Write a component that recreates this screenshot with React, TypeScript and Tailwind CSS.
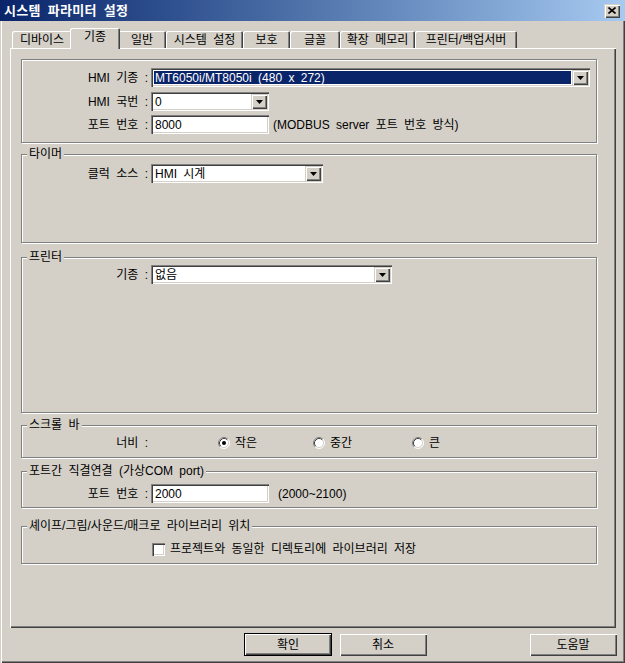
import React from "react";

const raised =
  "shadow-[inset_1px_1px_#d4d0c8,inset_2px_2px_#ffffff,inset_-1px_-1px_#404040,inset_-2px_-2px_#808080]";
const sunken =
  "shadow-[inset_1px_1px_#808080,inset_2px_2px_#404040,inset_-1px_-1px_#ffffff,inset_-2px_-2px_#d4d0c8]";
const etched = "border border-[#808080] shadow-[inset_1px_1px_#ffffff,1px_1px_#ffffff]";

function Arrow() {
  return (
    <div className={`w-[16px] h-full bg-[#d4d0c8] flex items-center justify-center ${raised}`}>
      <svg width="7" height="4" viewBox="0 0 7 4">
        <path d="M0 0H7L3.5 4Z" fill="#000" />
      </svg>
    </div>
  );
}

function Combo({ width, value, selected }: { width: string; value: string; selected?: boolean }) {
  return (
    <div className={`${width} h-[19px] p-[2px] bg-white flex ${sunken}`}>
      <div className="flex-1 min-w-0 p-[1px] flex">
        <span
          className={`flex-1 flex items-center pl-[1px] leading-none ${
            selected ? "bg-[#0a246a] text-white" : "text-black"
          }`}
        >
          {value}
        </span>
      </div>
      <Arrow />
    </div>
  );
}

function Input({ width, value }: { width: string; value: string }) {
  return (
    <div className={`${width} h-[19px] p-[2px] bg-white flex items-center ${sunken}`}>
      <span className="pl-[2px] leading-none">{value}</span>
    </div>
  );
}

function Label({ text }: { text: string }) {
  return <div className="w-[129px] shrink-0 text-right pr-[3px] leading-none">{text}</div>;
}

function Group({
  title,
  className,
  children,
}: {
  title?: string;
  className: string;
  children?: React.ReactNode;
}) {
  return (
    <div className={`relative w-[576px] ${etched} ${className}`}>
      {title && (
        <span className="absolute left-[5px] -top-[7px] px-[2px] bg-[#d4d0c8] leading-[13px]">{title}</span>
      )}
      {children}
    </div>
  );
}

function Radio({ checked }: { checked?: boolean }) {
  return (
    <svg width="12" height="12" viewBox="0 0 12 12" className="shrink-0">
      <circle cx="6" cy="6" r="5" fill="#fff" />
      <path d="M2.11 9.89A5.5 5.5 0 0 1 9.89 2.11" stroke="#808080" fill="none" />
      <path d="M9.89 2.11A5.5 5.5 0 0 1 2.11 9.89" stroke="#ffffff" fill="none" />
      <path d="M2.82 9.18A4.5 4.5 0 0 1 9.18 2.82" stroke="#404040" fill="none" />
      <path d="M9.18 2.82A4.5 4.5 0 0 1 2.82 9.18" stroke="#d4d0c8" fill="none" />
      {checked && <circle cx="6" cy="6" r="2" fill="#000" />}
    </svg>
  );
}

const tabs = [
  { label: "디바이스", w: "w-[60px]" },
  { label: "기종", w: "w-[50px]", active: true },
  { label: "일반", w: "w-[48px]" },
  { label: "시스템 설정", w: "w-[77px]" },
  { label: "보호", w: "w-[47px]" },
  { label: "글꼴", w: "w-[50px]" },
  { label: "확장 메모리", w: "w-[75px]" },
  { label: "프린터/백업서버", w: "w-[102px]" },
];

function Button({ text, primary, className }: { text: string; primary?: boolean; className: string }) {
  return (
    <div
      className={`w-[88px] h-[23px] flex items-center justify-center bg-[#d4d0c8] leading-none ${className} ${
        primary
          ? "shadow-[inset_0_0_0_1px_#000,inset_2px_2px_#ffffff,inset_-2px_-2px_#404040,inset_-3px_-3px_#808080]"
          : raised
      }`}
    >
      {text}
    </div>
  );
}

export default function App() {
  return (
    <div className="w-[625px] h-[663px] bg-[#d4d0c8] flex flex-col text-[12px] text-black [word-spacing:3px] font-['Liberation_Sans','Noto_Sans_CJK_KR',sans-serif] shadow-[inset_1px_1px_#d4d0c8,inset_2px_2px_#ffffff,inset_-1px_-1px_#404040,inset_-2px_-2px_#808080] select-none">
      {/* title bar */}
      <div className="h-[21px] shrink-0 bg-gradient-to-r from-[#0a246a] to-[#a6caf0] flex items-center justify-between pl-[4px] pr-[5px]">
        <span className="text-white font-bold text-[13px] leading-none tracking-[0.3px]">시스템 파라미터 설정</span>
        <div className={`w-[16px] h-[14px] bg-[#d4d0c8] flex items-center justify-center ${raised}`}>
          <svg width="8" height="7" viewBox="0 0 8 7">
            <path d="M0.5 0.5L7.5 6.5M7.5 0.5L0.5 6.5" stroke="#000" strokeWidth="1.6" />
          </svg>
        </div>
      </div>

      {/* tabs */}
      <div className="mt-[7px] h-[20px] flex items-end pl-[12px]">
        {tabs.map((t) =>
          t.active ? (
            <div
              key={t.label}
              className={`${t.w} -mx-[2px] h-[21px] -mb-[1px] relative z-10 bg-[#d4d0c8] rounded-t-[2px] flex justify-center pt-[2px] leading-[14px] shadow-[inset_1px_1px_#ffffff,inset_-1px_0_#404040,inset_-2px_0_#808080]`}
            >
              {t.label}
            </div>
          ) : (
            <div
              key={t.label}
              className={`${t.w} h-[17px] bg-[#d4d0c8] rounded-t-[2px] flex justify-center pt-[2px] leading-[14px] shadow-[inset_1px_1px_#ffffff,inset_-1px_0_#404040,inset_-2px_0_#808080]`}
            >
              {t.label}
            </div>
          )
        )}
      </div>

      {/* tab panel */}
      <div className="ml-[10px] w-[606px] h-[580px] shrink-0 pl-[11px] pt-[11px] flex flex-col shadow-[inset_1px_1px_#ffffff,inset_-1px_-1px_#404040,inset_-2px_-2px_#808080]">
        <Group className="h-[84px] pt-[8px] flex flex-col">
          <div className="flex items-center">
            <Label text="HMI 기종 :" />
            <Combo width="w-[439px]" value="MT6050i/MT8050i (480 x 272)" selected />
          </div>
          <div className="flex items-center mt-[5px]">
            <Label text="HMI 국번 :" />
            <Combo width="w-[118px]" value="0" />
          </div>
          <div className="flex items-center mt-[4px]">
            <Label text="포트 번호 :" />
            <Input width="w-[118px]" value="8000" />
            <span className="ml-[4px] leading-none">(MODBUS server 포트 번호 방식)</span>
          </div>
        </Group>

        <Group title="타이머" className="mt-[11px] h-[89px] pt-[9px]">
          <div className="flex items-center">
            <Label text="클럭 소스 :" />
            <Combo width="w-[172px]" value="HMI 시계" />
          </div>
        </Group>

        <Group title="프린터" className="mt-[14px] h-[156px] pt-[7px]">
          <div className="flex items-center">
            <Label text="기종 :" />
            <Combo width="w-[241px]" value="없음" />
          </div>
        </Group>

        <Group title="스크롤 바" className="mt-[12px] h-[33px] pt-[9px]">
          <div className="flex items-center h-[16px]">
            <Label text="너비 :" />
            <div className="ml-[67px] w-[95px] flex items-center gap-[5px]">
              <Radio checked />
              <span className="leading-none">작은</span>
            </div>
            <div className="w-[99px] flex items-center gap-[5px]">
              <Radio />
              <span className="leading-none">중간</span>
            </div>
            <div className="flex items-center gap-[5px]">
              <Radio />
              <span className="leading-none">큰</span>
            </div>
          </div>
        </Group>

        <Group title="포트간 직결연결 (가상COM port)" className="mt-[13px] h-[37px] pt-[12px]">
          <div className="flex items-center">
            <Label text="포트 번호 :" />
            <Input width="w-[118px]" value="2000" />
            <span className="ml-[9px] leading-none">(2000~2100)</span>
          </div>
        </Group>

        <Group title="셰이프/그림/사운드/매크로 라이브러리 위치" className="mt-[18px] h-[38px] pt-[14px]">
          <div className="flex items-center h-[16px]">
            <div className="w-[129px] shrink-0" />
            <div className={`ml-[1px] w-[13px] h-[13px] bg-white ${sunken}`} />
            <span className="ml-[5px] leading-none">프로젝트와 동일한 디렉토리에 라이브러리 저장</span>
          </div>
        </Group>
      </div>

      {/* buttons */}
      <div className="mt-[5px] flex">
        <Button text="확인" primary className="ml-[244px]" />
        <Button text="취소" className="ml-[7px]" />
        <Button text="도움말" className="ml-[102px]" />
      </div>
    </div>
  );
}
